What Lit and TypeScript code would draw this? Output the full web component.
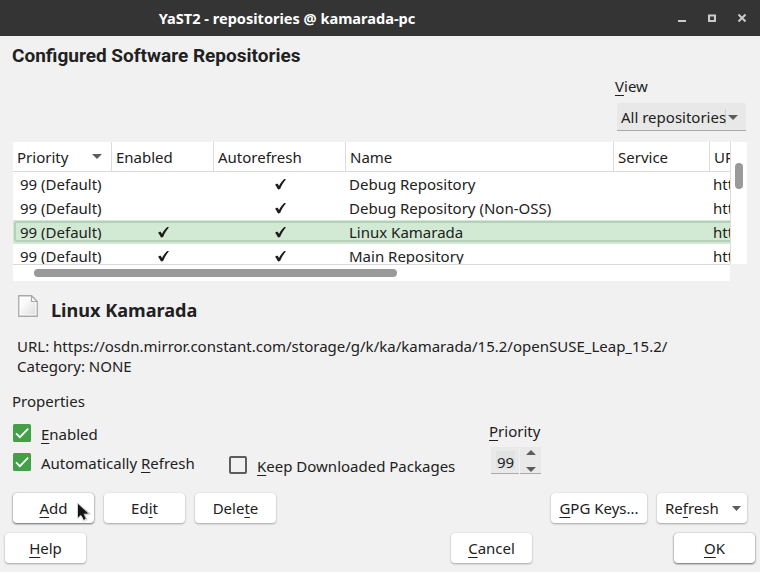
import { LitElement, html, css, nothing } from "lit";
import { customElement, property } from "lit/decorators.js";

// Splits "A&dd" style captions into text with an underlined mnemonic letter.
function caption(text: string) {
  const i = text.indexOf("&");
  if (i < 0) return html`${text}`;
  return html`${text.slice(0, i)}<span class="key">${text[i + 1]}</span>${text.slice(i + 2)}`;
}

const keyStyle = css`
  .key {
    text-decoration: underline;
    text-decoration-thickness: 1px;
    text-underline-offset: 3px;
    text-decoration-skip-ink: none;
  }
`;

@customElement("push-button")
export class PushButton extends LitElement {
  @property() label = "";
  @property({ type: Boolean }) menu = false;
  @property({ type: Boolean }) strong = false;

  static styles = [
    keyStyle,
    css`
      :host { display: block; height: 30px; width: 81px; }
      .button {
        display: flex; align-items: center; justify-content: center; box-sizing: border-box;
        width: 100%; height: 30px; padding: 0 0 1px; border: 0; border-radius: 4px;
        background: #fff; color: #212121; font: inherit; white-space: nowrap;
        box-shadow: 0 0 1px 0 #c4c4c4, 0 1px 2px 0 #a2a2a2;
      }
      .strong { box-shadow: 0 0 1.500px 0 #a0a0a0, 0 1px 2px 0 #626262; }
      .menu { justify-content: space-between; padding: 0 6px 1px 8px; }
      .arrow { width: 9px; height: 5px; fill: #5c5c5c; margin-top: 1px; }
    `,
  ];

  render() {
    return html`<button class="button ${this.menu ? "menu" : ""} ${this.strong ? "strong" : ""}">
      <span>${caption(this.label)}</span>
      ${this.menu ? html`<svg class="arrow" viewBox="0 0 9 5"><path d="M0 0h9L4.500 5z" /></svg>` : nothing}
    </button>`;
  }
}

@customElement("check-option")
export class CheckOption extends LitElement {
  @property() label = "";
  @property({ type: Boolean }) checked = false;

  static styles = [
    keyStyle,
    css`
      :host { display: flex; gap: 10px; height: 20px; white-space: nowrap; }
      .box { width: 18px; height: 18px; flex: none; }
      .text { line-height: 20px; }
    `,
  ];

  render() {
    return html`
      <svg class="box" viewBox="0 0 18 18">
        ${this.checked
          ? html`<svg viewBox="0 0 18 18"><rect width="18" height="18" rx="1.500" fill="#43a047" /><path d="M3 9.300l3.900 3.900L15.200 4.600" fill="none" stroke="#fff" stroke-width="1.700" /></svg>`
          : html`<svg viewBox="0 0 18 18"><rect x="1" y="1" width="16" height="16" rx="1" fill="none" stroke="#5c5c5c" stroke-width="2" /></svg>`}
      </svg>
      <span class="text">${caption(this.label)}</span>
    `;
  }
}

interface Repo { name: string; enabled: boolean; selected?: boolean }

const tick = html`<svg class="mark" viewBox="0 0 11 11">
  <path d="M0 5.700L2.200 4.500C3 5 3.500 5.800 4 6.900C5.600 4 7.200 1.800 9.200 0L11 .2C8.600 3 6.700 6.300 5.100 10L3 10.500C2.200 8.600 1.200 6.900 0 5.700z" />
</svg>`;

@customElement("repo-table")
export class RepoTable extends LitElement {
  private repos: Repo[] = [
    { name: "Debug Repository", enabled: false },
    { name: "Debug Repository (Non-OSS)", enabled: false },
    { name: "Linux Kamarada", enabled: true, selected: true },
    { name: "Main Repository", enabled: true },
  ];

  static styles = css`
    :host { display: grid; grid-template-columns: 717px 17px; grid-template-rows: 123px 16px; height: 139px; }
    .view {
      box-sizing: border-box; overflow: hidden; background: #fff;
      border-bottom: 1px solid #d9d9d9;
    }
    .row { display: grid; grid-template-columns: 99px 102px 132px 268px 96px 20px; height: 24px; overflow: hidden; }
    .head { height: 30px; box-sizing: border-box; border-bottom: 1px solid #dcdcdc; }
    .head .cell { line-height: 30px; padding-left: 4px; border-right: 1px solid #dcdcdc; }
    .head .cell:last-child { border-right: 0; }
    .cell { overflow: hidden; white-space: nowrap; line-height: 25px; padding-left: 3px; }
    .first { padding-left: 7px; }
    .head .sort { display: flex; justify-content: space-between; align-items: flex-start; padding-right: 9px; }
    .arrow { width: 10px; height: 5px; fill: #5c5c5c; margin-top: 12px; }
    .tick { display: flex; justify-content: center; padding: 7px 0 0 1px; }
    .mark { width: 11px; height: 11px; fill: #1c1c1c; }
    .selected { background: #d2e9d4; position: relative; }
    .selected::after {
      content: ""; position: absolute; inset: 1px -4px 2px 1px;
      border: 2px solid #b5cfb8; border-radius: 3px;
    }
    .vbar { background: #fff; border-left: 1px solid #dcdcdc; padding: 21px 4px 0 4px; box-sizing: border-box; height: 122px; }
    .hbar { background: #fff; padding: 4px 0 0 21px; box-sizing: border-box; }
    .vthumb { width: 8px; height: 26px; border-radius: 4px; background: #9a9a9a; }
    .hthumb { width: 363px; height: 8px; border-radius: 4px; background: #9a9a9a; }
  `;

  render() {
    return html`
      <div class="view">
        <div class="row head">
          <div class="cell sort">Priority<svg class="arrow" viewBox="0 0 10 5"><path d="M0 0h10L5 5z" /></svg></div>
          <div class="cell">Enabled</div>
          <div class="cell">Autorefresh</div>
          <div class="cell">Name</div>
          <div class="cell">Service</div>
          <div class="cell">URL</div>
        </div>
        ${this.repos.map(
          (r) => html`<div class="row ${r.selected ? "selected" : ""}">
            <div class="cell first">99 (Default)</div>
            <div class="cell tick">${r.enabled ? tick : nothing}</div>
            <div class="cell tick">${tick}</div>
            <div class="cell">${r.name}</div>
            <div class="cell"></div>
            <div class="cell">https</div>
          </div>`
        )}
      </div>
      <div class="vbar"><div class="vthumb"></div></div>
      <div class="hbar"><div class="hthumb"></div></div>
    `;
  }
}

@customElement("app-root")
export class AppRoot extends LitElement {
  static styles = [
    keyStyle,
    css`
      :host {
        display: flex; flex-direction: column; width: 760px; height: 572px; overflow: hidden;
        background: #f1f1f1; color: #212121; font: 15px/20px "Noto Sans", sans-serif; position: relative;
      }
      .titlebar {
        display: grid; grid-template-columns: 574px 1fr; align-items: center; height: 36px;
        background: #343434; color: #fff;
      }
      .title { text-align: center; font-weight: 700; font-size: 14.550px; }
      .controls { display: flex; gap: 22px; padding-left: 104px; }
      .controls svg { width: 8px; height: 8px; display: block; fill: none; stroke: #cbcbcb; stroke-width: 2; }
      .heading { margin: 8px 0 0 12px; height: 24px; font: 700 19px/24px Roboto, sans-serif; white-space: nowrap; }
      .filter { display: flex; flex-direction: column; width: 131px; margin: 8px 0 0 615px; height: 55px; }
      .combo {
        display: flex; align-items: center; height: 28px; margin: 7px 0 0 2px; padding: 0 8px 0 4px; box-sizing: border-box;
        background: #e8e8e8; border-bottom: 1px solid #ababab; border-radius: 2px 2px 0 0; white-space: nowrap; width: 129px;
      }
      .combo .value { width: 104px; border-right: 1px solid #d0d0d0; height: 16px; line-height: 17px; }
      .arrow { width: 10px; height: 5px; fill: #5c5c5c; flex: none; margin: 2px 0 0 2px; display: block; }
      .table { margin: 11px 0 0 13px; }
      .repo { display: flex; height: 30px; margin: 14px 0 0 18px; gap: 13px; }
      .file { width: 20px; height: 22px; }
      .repo-name { font-weight: 700; font-size: 18.100px; line-height: 30px; }
      .details { margin: 11px 0 0 17px; white-space: nowrap; }
      .section { margin: 15px 0 0 12px; }
      .props { display: grid; grid-template-columns: 216px 260px 60px; margin: 10px 0 0 13px; height: 62px; }
      .stack { display: flex; flex-direction: column; gap: 9px; padding-top: 3px; }
      .keep { padding-top: 35px; }
      .spin { display: flex; height: 27px; margin: 6px 0 0 2px; gap: 1px; }
      .field { width: 28px; box-sizing: border-box; padding: 4px 4px 0 5px; background: #e9e9e9; border-bottom: 1px solid #ababab; }
      .number { display: block; height: 18px; line-height: 22px; background: #e0e3e1; text-align: center; }
      .steps {
        width: 21px; box-sizing: border-box; background: #e9e9e9; border-bottom: 1px solid #ababab;
        display: flex; flex-direction: column; justify-content: space-between; align-items: center; padding: 3px 0 1px;
      }
      .steps .arrow { margin: 0; }
      .actions { display: flex; gap: 10px; margin: 10px 13px 0; height: 30px; }
      .footer { display: flex; margin: 10px 5px 0; height: 30px; }
      .push { margin-left: auto; }
      .gpg { width: 96px; }
      .refresh { width: 90px; }
      .ok { margin-left: 142px; }
      .cursor { position: absolute; left: 77px; top: 503px; width: 15px; height: 20px; }
    `,
  ];

  render() {
    return html`
      <header class="titlebar">
        <span class="title">YaST2 - repositories @ kamarada-pc</span>
        <span class="controls">
          <svg viewBox="0 0 8 8"><path d="M0 7h8" /></svg>
          <svg viewBox="0 0 8 8"><path d="M1 1.500h6v5.500H1z" stroke-width="2.200" /></svg>
          <svg viewBox="0 0 8 8"><path d="M.5.5l7 7M7.500.5l-7 7" /></svg>
        </span>
      </header>
      <h1 class="heading">Configured Software Repositories</h1>
      <div class="filter">
        <span>${caption("&View")}</span>
        <div class="combo">
          <span class="value">All repositories</span>
          <svg class="arrow" viewBox="0 0 10 5"><path d="M0 0h10L5 5z" /></svg>
        </div>
      </div>
      <repo-table class="table"></repo-table>
      <div class="repo">
        <svg class="file" viewBox="0 0 20 22">
          <defs><linearGradient id="paper" x1="1" y1="1" x2="0" y2="0"><stop offset="0" stop-color="#dedede" /><stop offset=".7" stop-color="#fafafa" /></linearGradient></defs>
          <path d="M.75.75H13.500L19.250 6.500V21.250H.75z" fill="#fff" stroke="#a9a9a9" stroke-width="1.300" />
          <path d="M2.500 2.500H12L17.500 8V19.500H2.500z" fill="url(#paper)" />
          <path d="M13.500.75V6.500H19.250z" fill="#fff" stroke="#a9a9a9" stroke-width="1.200" />
        </svg>
        <span class="repo-name">Linux Kamarada</span>
      </div>
      <div class="details">
        <div>URL: https://osdn.mirror.constant.com/storage/g/k/ka/kamarada/15.2/openSUSE_Leap_15.2/</div>
        <div>Category: NONE</div>
      </div>
      <div class="section">Properties</div>
      <div class="props">
        <div class="stack">
          <check-option label="&Enabled" checked></check-option>
          <check-option label="Automatically &Refresh" checked></check-option>
        </div>
        <div class="keep"><check-option label="&Keep Downloaded Packages"></check-option></div>
        <div>
          <div>${caption("&Priority")}</div>
          <div class="spin">
            <div class="field"><span class="number">99</span></div>
            <div class="steps">
              <svg class="arrow" viewBox="0 0 10 5"><path d="M0 5h10L5 0z" /></svg>
              <svg class="arrow" viewBox="0 0 10 5"><path d="M0 0h10L5 5z" /></svg>
            </div>
          </div>
        </div>
      </div>
      <div class="actions">
        <push-button label="&Add" strong></push-button>
        <push-button label="Ed&it"></push-button>
        <push-button label="Dele&te"></push-button>
        <push-button class="push gpg" label="&GPG Keys..."></push-button>
        <push-button class="refresh" label="Re&fresh" menu></push-button>
      </div>
      <div class="footer">
        <push-button label="&Help"></push-button>
        <push-button class="push" label="&Cancel"></push-button>
        <push-button class="ok" label="&OK" strong></push-button>
      </div>
      <svg class="cursor" viewBox="0 0 15 20">
        <path d="M1 1v13.500l3-2.800L6.500 18l3-1.300L7.300 11.500l5.200-.7z" fill="#bdbdbd" stroke="#c8c8c8" stroke-width="1.600" />
        <path d="M1 1v13.500l3-2.800L6.500 17l2.200-1L6.600 10.800l4.600-.4z" fill="#141414" />
        <path d="M4.500 13.500l2 4.300 2.800-1.200" fill="none" stroke="#fff" stroke-width=".9" />
      </svg>
    `;
  }
}
